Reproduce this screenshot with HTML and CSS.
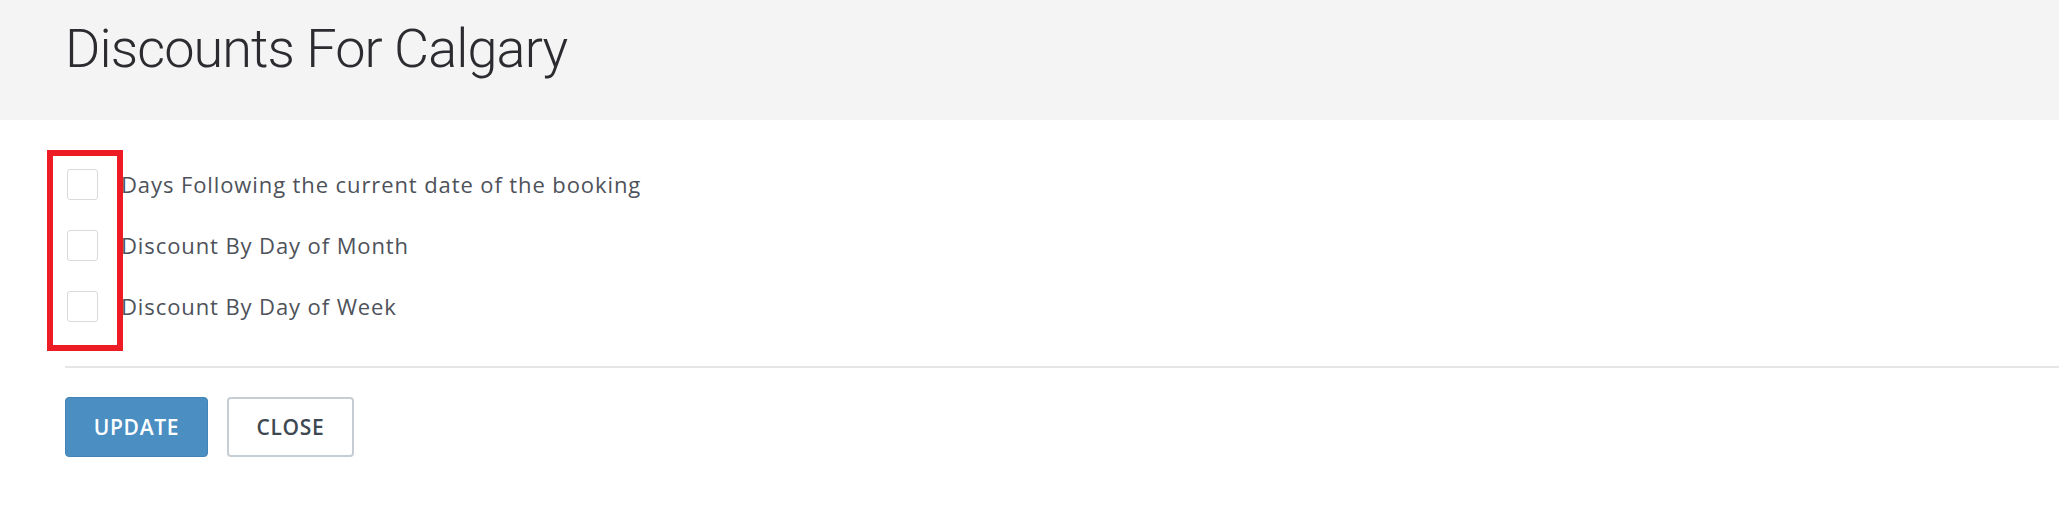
FILE: index.html
```html
<!DOCTYPE html>
<html lang="en">
<head>
    <meta charset="UTF-8">
    <meta name="viewport" content="width=device-width, initial-scale=1.0">
    <title>Discounts For Calgary</title>
    <link rel="stylesheet" href="styles.css">
</head>
<body>
    <div class="modal-header">
        <h1>Discounts For Calgary</h1>
    </div>
    <form class="modal-body" method="POST">
        <div class="options">
            <label class="option">
                <input type="checkbox" name="days_following">
                <span>Days Following the current date of the booking</span>
            </label>
            <label class="option">
                <input type="checkbox" name="day_of_month">
                <span>Discount By Day of Month</span>
            </label>
            <label class="option">
                <input type="checkbox" name="day_of_week">
                <span>Discount By Day of Week</span>
            </label>
            <div class="highlight"></div>
        </div>
        <hr class="divider">
        <div class="actions">
            <button type="submit" class="btn btn-primary">UPDATE</button>
            <button type="button" class="btn btn-default">CLOSE</button>
        </div>
    </form>
</body>
</html>
```

FILE: styles.css
```css
body {
    margin: 0;
    padding: 0;
    background: #fff;
    font-family: "Open Sans", Arial, sans-serif;
    color: #4e525a;
}
.modal-header {
    background: #f4f4f4;
    height: 120px;
    box-sizing: border-box;
    padding: 22px 65px 0;
}
.modal-header h1 {
    margin: 0;
    font-family: Roboto, "Liberation Sans", sans-serif;
    font-weight: 300;
    font-size: 54px;
    line-height: 54px;
    letter-spacing: -0.9px;
    color: #2b2b30;
}
.modal-body {
    padding: 49px 0 0;
}
.options {
    position: relative;
    display: flex;
    flex-direction: column;
    gap: 30px;
    padding-left: 67px;
}
.option {
    display: flex;
    align-items: center;
    height: 31px;
    cursor: pointer;
}
.option input {
    appearance: none;
    -webkit-appearance: none;
    margin: 0 23px 0 0;
    width: 31px;
    height: 31px;
    border: 1px solid #dadada;
    border-radius: 3px;
    background: #fff;
    box-sizing: border-box;
}
.option span {
    font-size: 22px;
    letter-spacing: 0.9px;
    color: #4e525a;
    margin-top: -2px;
}
.highlight {
    position: absolute;
    left: 47px;
    top: -19px;
    width: 76px;
    height: 201px;
    box-sizing: border-box;
    border: 6px solid #ed1c24;
}
.divider {
    margin: 44px 0 0 65px;
    border: none;
    border-top: 2px solid #e6e6e6;
}
.actions {
    display: flex;
    gap: 19px;
    padding: 29px 65px 0;
}
.btn {
    height: 60px;
    border-radius: 4px;
    font-family: "Open Sans", Arial, sans-serif;
    font-size: 21px;
    font-weight: 600;
    letter-spacing: 0.7px;
    cursor: pointer;
    box-sizing: border-box;
}
.btn-primary {
    width: 143px;
    background: #4a8ec2;
    border: 1px solid #4283b8;
    color: #fff;
}
.btn-default {
    width: 127px;
    background: #fff;
    border: 2px solid #c6cdd4;
    color: #3d4852;
}
```
